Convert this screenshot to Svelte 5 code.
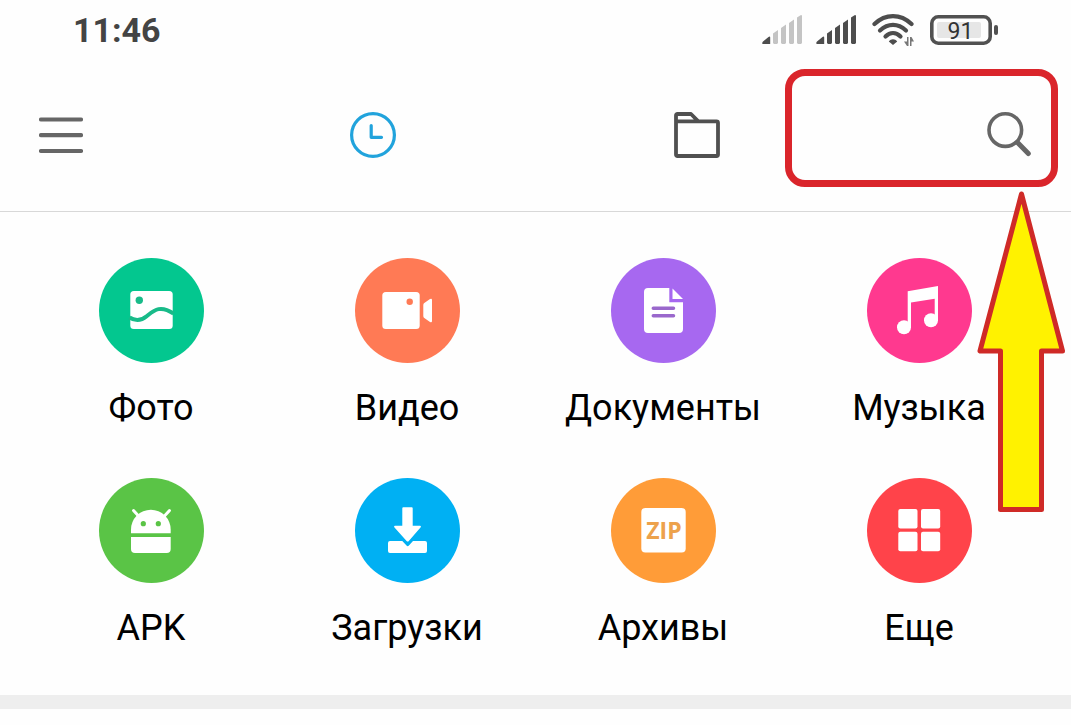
<script lang="ts">
	interface Category {
		id: string;
		label: string;
		color: string;
	}

	const categories: Category[] = [
		{ id: 'photo', label: 'Фото', color: '#03c78f' },
		{ id: 'video', label: 'Видео', color: '#ff7a55' },
		{ id: 'docs', label: 'Документы', color: '#a768f0' },
		{ id: 'music', label: 'Музыка', color: '#ff398f' },
		{ id: 'apk', label: 'APK', color: '#5ac446' },
		{ id: 'downloads', label: 'Загрузки', color: '#00b0f3' },
		{ id: 'archives', label: 'Архивы', color: '#ff9c38' },
		{ id: 'more', label: 'Еще', color: '#ff434a' }
	];

	const signals = ['weak', 'full'];

	let activeTab = $state('recent');
</script>

<div class="screen">
	<div class="status-bar">
		<time>11:46</time>
		<div class="status-icons">
			{#each signals as signal}
				<svg class="signal {signal}" width="40" height="30" viewBox="0 0 40 30" aria-hidden="true">
					<path class="on" d="M1 29C0 29 0 27.500 1 26.500L6.500 22C7.500 21 8.200 21.500 8.200 22.500V29Z" />
					<path d="M11 18.500L16 15V28L15 29H12L11 28Z" />
					<path d="M19 13L24 9.500V28L23 29H20L19 28Z" />
					<path d="M27 8L32 4.500V28L31 29H28L27 28Z" />
					<path d="M35 2.500L39 0L40 .5V28L39 29H36L35 28Z" />
				</svg>
			{/each}
			<svg class="wifi" width="42" height="36" viewBox="0 0 42 36" aria-hidden="true">
				<g fill="none" stroke="#4d4d4d" stroke-width="4.200" stroke-linecap="round">
					<path d="M2.500 12C13.500 1.500 28.500 1.500 39.500 12" />
					<path d="M8 18.500C16 11 26 11 34 18.500" />
					<path d="M13.500 24.500C18 20 24 20 28.500 24.500" />
				</g>
				<path fill="#4d4d4d" d="M16.800 29.500C19 26.500 23 26.500 25.200 29.500L21 33Z" />
				<path fill="#777" d="M35 25H36.500V34H35L32 29.500H35ZM38 25H39.500L42 29.500H39.500V34H38Z" />
			</svg>
			<svg class="battery" width="68" height="30" viewBox="0 0 68 30" role="img" aria-label="91%">
				<rect x="7" y="7" width="44" height="16" rx="2" fill="#e6e6e6" />
				<rect x="1.8" y="1.8" width="58.4" height="26.4" rx="6.500" fill="none" stroke="#515151" stroke-width="3.600" />
				<rect x="64" y="10" width="4" height="10" rx="2" fill="#515151" />
				<text x="30.500" y="24" text-anchor="middle">91</text>
			</svg>
		</div>
	</div>

	<header class="toolbar">
		<button type="button" aria-label="Меню">
			<svg width="44" height="46" viewBox="0 0 44 46">
				<path d="M2 7.500H42M2 23.200H42M2 39H42" stroke="#666" stroke-width="4.200" stroke-linecap="round" />
			</svg>
		</button>
		<nav class="tabs">
			<button
				type="button"
				class="tab"
				class:active={activeTab === 'recent'}
				aria-label="Недавние"
				onclick={() => (activeTab = 'recent')}
			>
				<svg width="46" height="46" viewBox="0 0 46 46" fill="none" stroke="currentColor" stroke-width="3.200">
					<circle cx="23" cy="23" r="21.400" />
					<path d="M21.200 13.500V25.300H31.500" stroke-linecap="round" stroke-linejoin="round" />
				</svg>
			</button>
			<button
				type="button"
				class="tab"
				class:active={activeTab === 'storage'}
				aria-label="Хранилище"
				onclick={() => (activeTab = 'storage')}
			>
				<svg width="46" height="46" viewBox="0 0 46 46" fill="none" stroke="currentColor" stroke-width="3.800">
					<path d="M2 9.300H42.500Q44 9.300 44 10.800V42.500Q44 44 42.500 44H3.500Q2 44 2 42.500V3.500Q2 2 3.500 2H17L24.300 9.300" stroke-linejoin="round" />
				</svg>
			</button>
		</nav>
		<button type="button" aria-label="Поиск">
			<svg width="44" height="46" viewBox="0 0 44 46" fill="none" stroke="#666" stroke-linecap="round">
				<circle cx="18.300" cy="18.100" r="16.300" stroke-width="3.600" />
				<path d="M30.500 30.500L41.300 41.500" stroke-width="5" />
			</svg>
		</button>
		<div class="highlight"></div>
	</header>

	<main class="categories">
		{#each categories as category (category.id)}
			<button type="button" class="category">
				<svg width="105" height="105" viewBox="0 0 105 105" fill="#fff" aria-hidden="true">
					<circle cx="52.5" cy="52.5" r="52.5" fill={category.color} />
					{#if category.id === 'photo'}
						<rect x="31.300" y="33" width="42.400" height="38" rx="3.500" />
						<circle cx="40.300" cy="42.300" r="3.700" fill="#18bb89" />
						<path d="M30.500 59.500C36 63 42 63 48 58C55 52.500 61 46.500 74.500 55.500" fill="none" stroke="#18bb89" stroke-width="4" />
					{:else if category.id === 'video'}
						<rect x="27.300" y="34" width="37.400" height="37" rx="3.500" />
						<circle cx="54.700" cy="43.700" r="3.200" fill={category.color} />
						<path d="M69.300 45L75 41Q77 40 77 42V63Q77 65 75 64L69.300 60Q68.300 59.500 68.300 58V47Q68.300 45.700 69.300 45Z" />
					{:else if category.id === 'docs'}
						<path d="M37 30H58.300V44.200H72V71Q72 75 68 75H37Q33 75 33 71V34Q33 30 37 30Z" />
						<path d="M61.500 30.500L72 41H61.500Z" />
						<path d="M42.300 50.300H62.500M42.300 57.700H62.500" stroke="#9a68cc" stroke-width="3.500" stroke-linecap="round" />
					{:else if category.id === 'music'}
						<path d="M40.700 33.300L71 28V62H67.700V40.700L44 44.500V69H40.700Z" />
						<circle cx="37" cy="69.300" r="7" />
						<circle cx="64" cy="62.300" r="7" />
					{:else if category.id === 'apk'}
						<path d="M32 55.300V51.500A19.800 19.800 0 0 1 71.700 51.500V55.300Z" />
						<path d="M32 59H71.700V71Q71.700 75 67.700 75H36Q32 75 32 71Z" />
						<path d="M34.500 32.500L40 38.500M70.500 32.500L65 38.500" stroke="#fff" stroke-width="3" stroke-linecap="round" />
						<circle cx="44.300" cy="45.700" r="2.600" fill={category.color} />
						<circle cx="59.300" cy="45.700" r="2.600" fill={category.color} />
					{:else if category.id === 'downloads'}
						<path d="M48.300 29.300H56.700Q57.700 29.300 57.700 30.300V47.700H65Q66.500 48 65.500 49.500L53.800 63Q52.700 64 51.600 63L39.500 49.500Q38.500 48 40 47.700H47.300V30.300Q47.300 29.300 48.300 29.300Z" />
						<path d="M35 63H47.300L51.500 67.600Q52.700 68.800 53.900 67.600L58 63H70Q72 63 72 65V73Q72 75 70 75H35Q33 75 33 73V65Q33 63 35 63Z" />
					{:else if category.id === 'archives'}
						<rect x="30.300" y="30" width="44.400" height="44.500" rx="4" />
						<text x="53" y="60.700" text-anchor="middle" fill="#eda24c">ZIP</text>
					{:else}
						<rect x="31.300" y="31" width="19.200" height="19.500" rx="2" />
						<rect x="54" y="31" width="19.200" height="19.500" rx="2" />
						<rect x="31.300" y="53.700" width="19.200" height="19.500" rx="2" />
						<rect x="54" y="53.700" width="19.200" height="19.500" rx="2" />
					{/if}
				</svg>
				<span>{category.label}</span>
			</button>
		{/each}
	</main>

	<div class="divider"></div>

	<svg class="pointer" width="88" height="324" viewBox="0 0 88 324" aria-hidden="true">
		<path
			d="M44.500 4L3 161H23.500V319.500H64.500V161H85.500Z"
			fill="#fff200"
			stroke="#cf2a27"
			stroke-width="5"
			stroke-linejoin="round"
		/>
	</svg>
</div>

<style>
	:global(body) {
		background: #fefefe;
	}

	.screen {
		position: relative;
		font-family: Roboto, sans-serif;
		color: #000;
	}

	.status-bar {
		display: flex;
		justify-content: space-between;
		align-items: center;
		height: 60px;
		padding: 0 73px;
	}

	time {
		font-size: 34px;
		line-height: 40px;
		font-weight: 700;
		color: #444;
	}

	.status-icons {
		display: flex;
		align-items: center;
		gap: 16px;
	}

	.signal {
		fill: #4d4d4d;
	}

	.signal + .signal {
		margin-left: -2px;
	}

	.signal.weak path:not(.on) {
		fill: #c4c4c4;
	}

	.battery text {
		font-size: 23px;
		font-weight: 400;
		fill: #333;
	}

	button {
		display: block;
		padding: 0;
		border: none;
		background: none;
		color: inherit;
		font: inherit;
		cursor: pointer;
	}

	svg {
		display: block;
	}

	.toolbar {
		position: relative;
		display: flex;
		justify-content: space-between;
		align-items: center;
		height: 149px;
		padding: 0 40px 2px 39px;
		border-bottom: 1px solid #d8d8d8;
	}

	.tabs {
		display: flex;
		gap: 26vw;
	}

	.tab {
		color: #505050;
	}

	.tab.active {
		color: #21a3dc;
	}

	.highlight {
		position: absolute;
		top: 9px;
		right: 13px;
		width: 273px;
		height: 118px;
		box-sizing: border-box;
		border: 7px solid #da252b;
		border-radius: 20px;
		pointer-events: none;
	}

	.categories {
		display: grid;
		grid-template-columns: repeat(4, 1fr);
		row-gap: 49px;
		padding: 46px 24px 46px 23px;
	}

	.category {
		display: flex;
		flex-direction: column;
		align-items: center;
		gap: 24px;
		font-size: 36px;
		line-height: 42px;
	}

	.category text {
		font-family: 'Open Sans', sans-serif;
		font-size: 23px;
		font-weight: 700;
	}

	.divider {
		height: 14px;
		background: #eee;
	}

	.pointer {
		position: absolute;
		top: 190px;
		right: 6px;
		pointer-events: none;
	}
</style>
